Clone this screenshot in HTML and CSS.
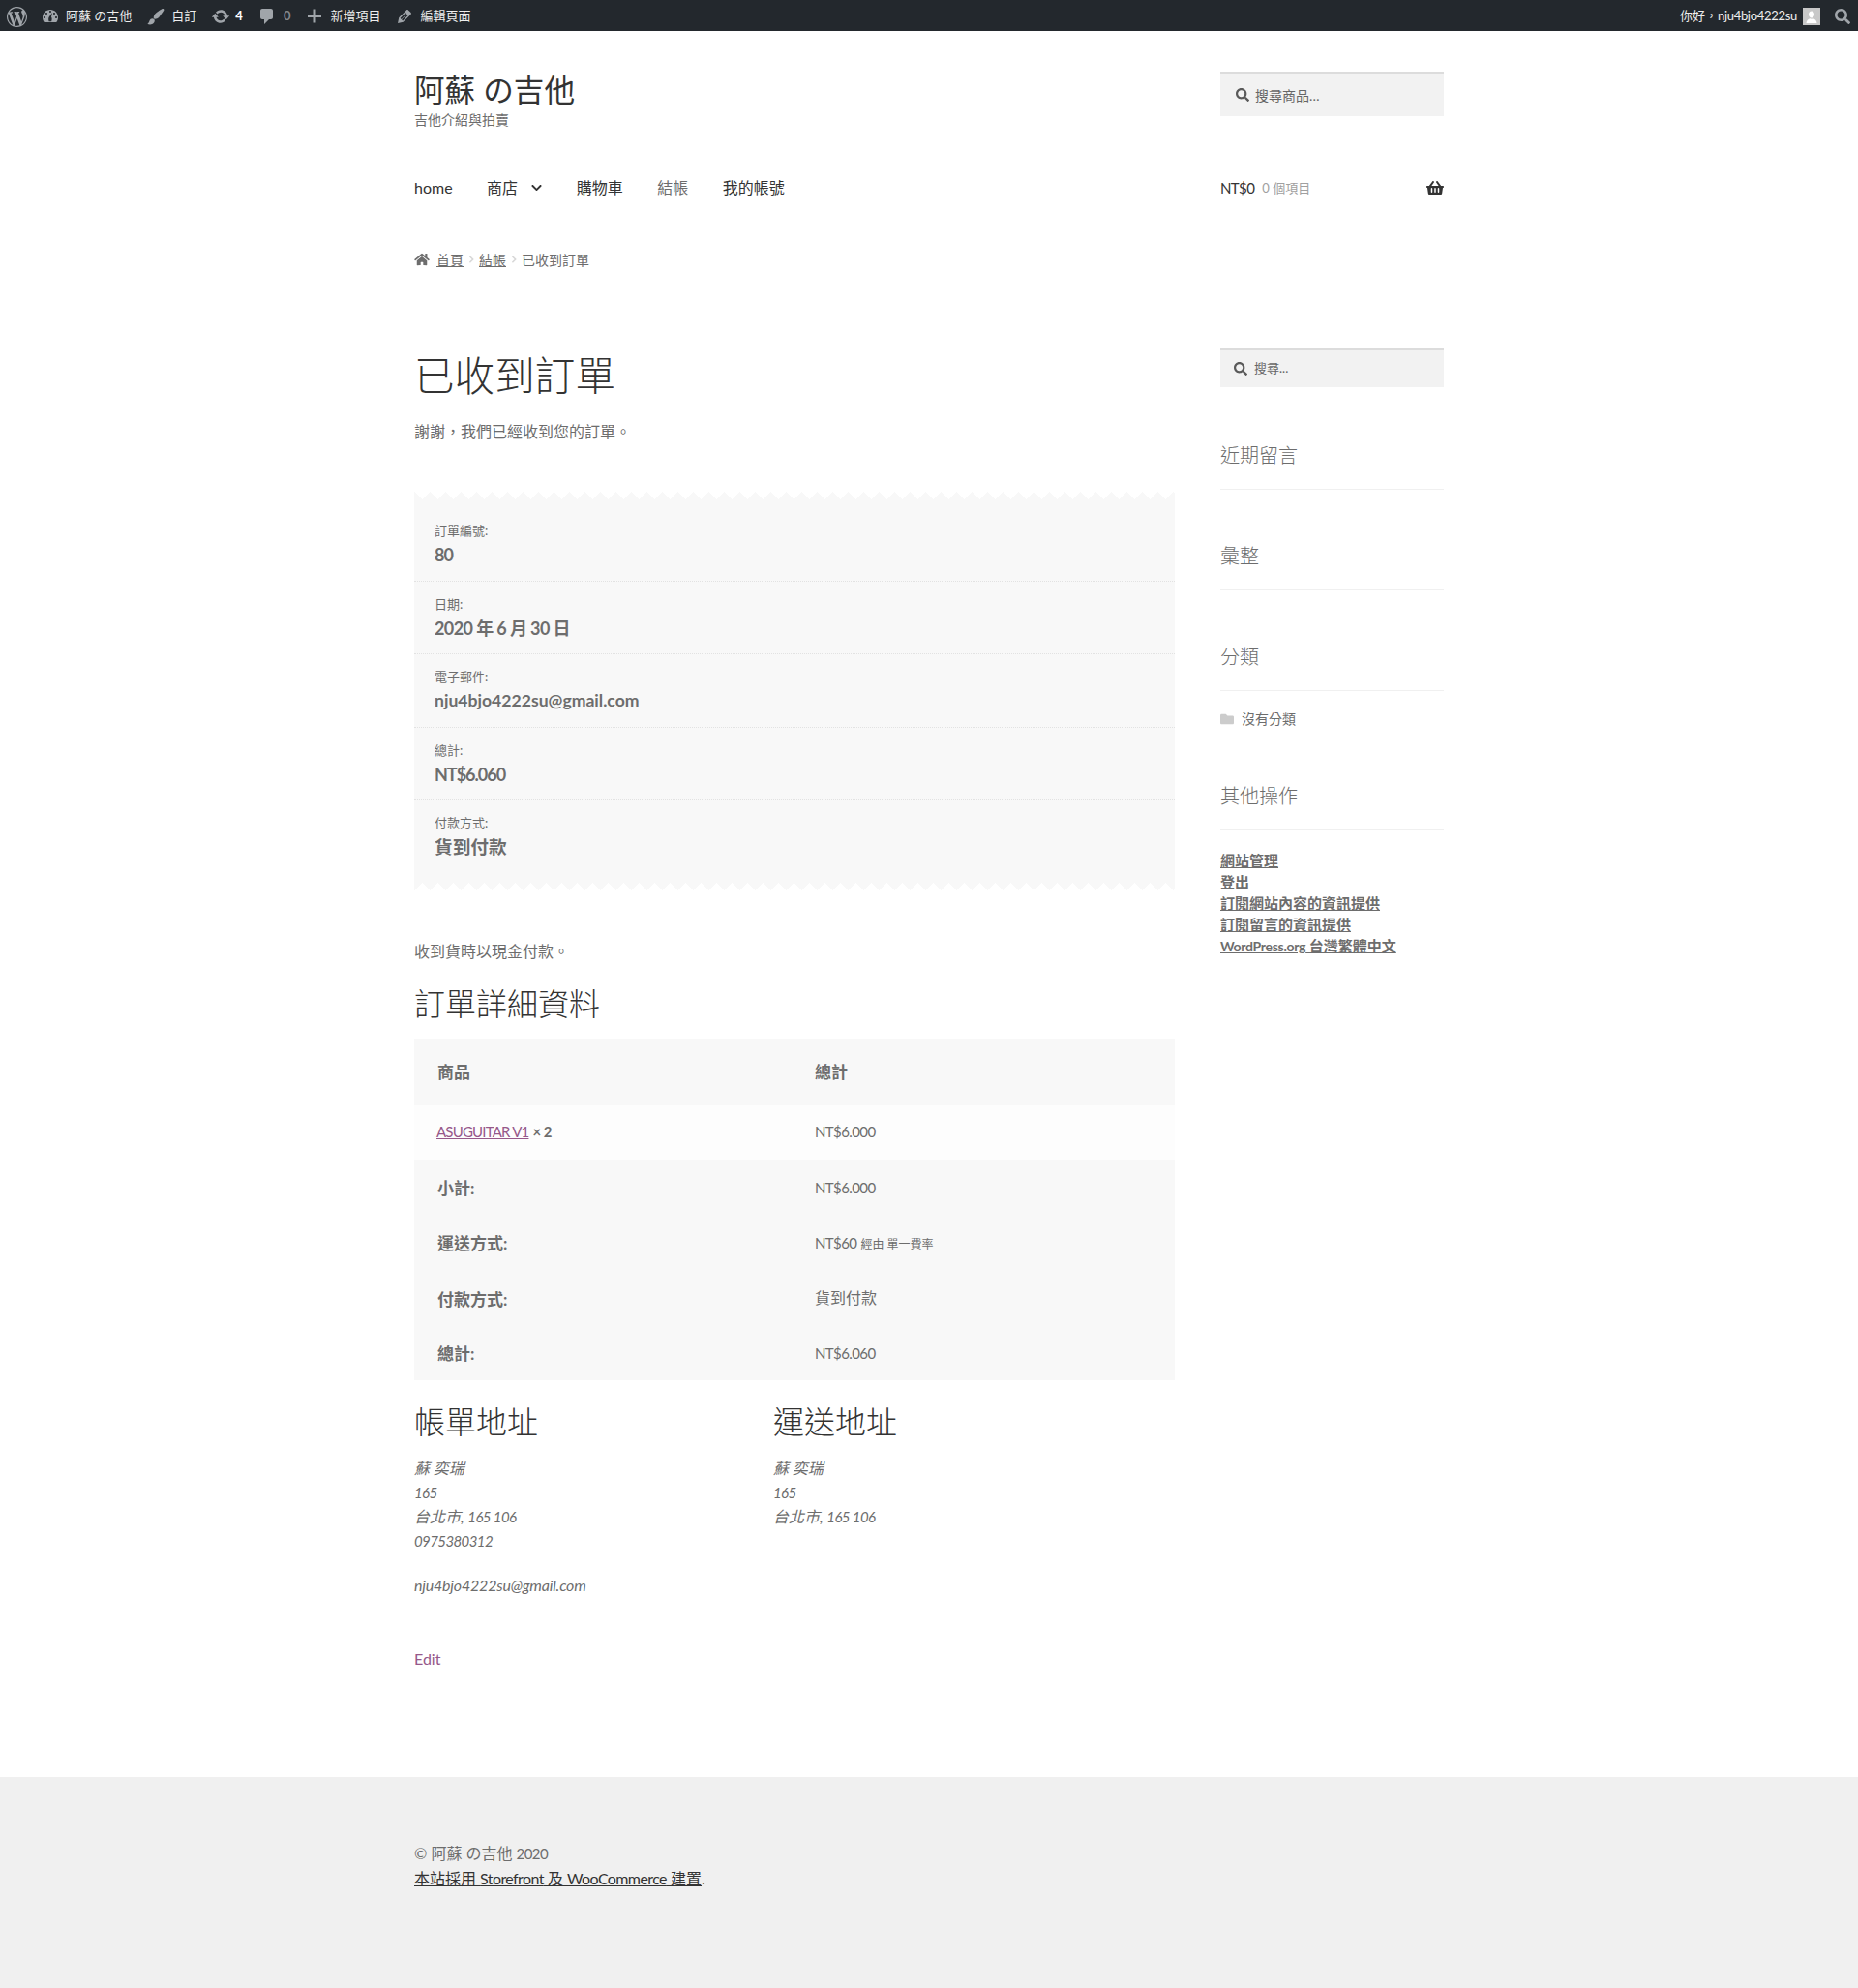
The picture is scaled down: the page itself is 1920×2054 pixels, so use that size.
FILE: index.html
```html
<!DOCTYPE html>
<html lang="zh-Hant">
<head>
    <meta charset="UTF-8">
    <title>已收到訂單 – 阿蘇 の吉他</title>
    <link rel="stylesheet" href="styles.css">
</head>
<body>
    <!-- Admin bar -->
    <div class="adminbar">
        <div class="adminbar-left">
            <svg class="ab-logo" viewBox="0 0 20 20"><path d="M20 10c0-5.51-4.49-10-10-10C4.480 0 0 4.490 0 10c0 5.520 4.480 10 10 10 5.510 0 10-4.480 10-10zM7.780 15.370L4.370 6.220c.55-.02 1.170-.08 1.170-.08.500-.060.440-1.130-.060-1.110 0 0-1.450.11-2.370.11-.18 0-.37 0-.58-.01C4.120 2.690 6.870 1.110 10 1.110c2.330 0 4.450.87 6.050 2.340-.68-.11-1.650.39-1.650 1.580 0 .74.450 1.360.9 2.100.350.610.55 1.360.55 2.460 0 1.490-1.400 5-1.400 5l-3.030-8.370c.54-.02.82-.17.82-.17.5-.05.44-1.250-.06-1.220 0 0-1.440.12-2.380.12-.87 0-2.330-.12-2.330-.12-.5-.03-.56 1.200-.06 1.220l.92.080 1.260 3.410zM17.410 10c.24-.64.74-1.870.43-4.250.7 1.290 1.050 2.710 1.050 4.250 0 3.290-1.730 6.240-4.400 7.780.97-2.590 1.940-5.200 2.920-7.780zM6.100 18.090C3.120 16.650 1.110 13.530 1.110 10c0-1.300.23-2.480.72-3.590C3.250 10.300 4.670 14.200 6.100 18.090zm4.030-6.630l2.580 6.980c-.86.29-1.760.45-2.710.45-.79 0-1.570-.11-2.290-.33.81-2.380 1.620-4.740 2.420-7.100z"/></svg>
            <a class="ab-item">
                <svg class="ab-icon" viewBox="0 0 20 20"><path d="M3.760 16h12.480c1.100-1.370 1.760-3.110 1.760-5 0-4.420-3.580-8-8-8s-8 3.580-8 8c0 1.890.66 3.630 1.760 5zM10 4c.55 0 1 .45 1 1s-.45 1-1 1-1-.45-1-1 .45-1 1-1zM6 6c.55 0 1 .45 1 1s-.45 1-1 1-1-.45-1-1 .45-1 1-1zm8 0c.55 0 1 .45 1 1s-.45 1-1 1-1-.45-1-1 .45-1 1-1zm-5.370 9.350s-.46-1.180-.46-2.500c0-.8.17-1.530.46-2.050L12 6l-1 4.500c.36.520.63 1.250.63 2.050 0 1.320-.46 2.800-.46 2.800zM4 10c.55 0 1 .45 1 1s-.45 1-1 1-1-.45-1-1 .45-1 1-1zm12 0c.55 0 1 .45 1 1s-.45 1-1 1-1-.45-1-1 .45-1 1-1z"/></svg>
                <span>阿蘇 の吉他</span>
            </a>
            <a class="ab-item">
                <svg class="ab-icon" viewBox="0 0 20 20"><path d="M18.330 3.570s.27-.8-.31-1.360c-.53-.52-1.220-.24-1.220-.24-.61.300-5.760 3.470-7.670 5.570-.86.960-2.060 3.790-1.090 4.820.92.980 3.960-.17 4.790-1 2.060-2.060 5.210-7.170 5.500-7.790zM1.400 17.650c2.370-1.560 1.460-3.410 3.230-4.850.93-.75 2.390-.97 3.410.01 1.020.97.980 2.680.020 3.780-2.280 2.590-5.280 2.100-6.660 1.060z"/></svg>
                <span>自訂</span>
            </a>
            <a class="ab-item">
                <svg class="ab-icon" viewBox="0 0 20 20"><path d="M10.200 3.280c3.530 0 6.430 2.610 6.920 6h2.080l-3.500 4-3.500-4h2.320c-.45-1.970-2.210-3.440-4.320-3.440-1.450 0-2.730.71-3.540 1.780L4.950 5.660C6.230 4.200 8.110 3.280 10.200 3.280zm-.4 13.440c-3.520 0-6.430-2.610-6.920-6H.8l3.500-4c1.170 1.330 2.330 2.670 3.500 4H5.480c.45 1.970 2.210 3.440 4.320 3.440 1.450 0 2.730-.71 3.540-1.780l1.710 1.950c-1.280 1.460-3.150 2.390-5.250 2.390z"/></svg>
                <span class="ab-count">4</span>
            </a>
            <a class="ab-item">
                <svg class="ab-icon" viewBox="0 0 20 20"><path d="M5 2h9c1.100 0 2 .9 2 2v7c0 1.100-.9 2-2 2h-2l-5 5v-5H5c-1.100 0-2-.9-2-2V4c0-1.100.9-2 2-2z"/></svg>
                <span class="ab-count ab-zero">0</span>
            </a>
            <a class="ab-item">
                <svg class="ab-icon" viewBox="0 0 20 20"><path d="M17 8v3h-5.500v5.500h-3V11H3V8h5.500V2.500h3V8z"/></svg>
                <span>新增項目</span>
            </a>
            <a class="ab-item">
                <svg class="ab-icon" viewBox="0 0 20 20"><path d="M13.890 3.390l2.710 2.700c.46.460.42 1.240.03 1.640l-8.010 8.020-5.560 1.160 1.160-5.580s7.600-7.630 7.990-8.030c.39-.39 1.220-.39 1.680.09zM11.160 6.180l-5.590 5.610 1.110 1.110 5.540-5.650zM8.190 14.410l5.580-5.600-1.120-1.120-5.580 5.600z"/></svg>
                <span>編輯頁面</span>
            </a>
        </div>
        <div class="adminbar-right">
            <span>你好，<span class="ab-user">nju4bjo4222su</span></span>
            <span class="ab-avatar">
                <svg viewBox="0 0 18 18"><path d="M9 3.500c1.900 0 3 1.500 3 3.300 0 1.900-1.200 3.700-3 3.700S6 8.700 6 6.800C6 5 7.100 3.500 9 3.500zM3.500 16c0-2.800 2.300-4.500 3.900-4.800.9.600 2.300.6 3.200 0 1.600.3 3.900 2 3.900 4.800z"/></svg>
            </span>
            <svg class="ab-search" viewBox="0 0 512 512"><path d="M505 442.700L405.300 343c-4.500-4.500-10.600-7-17-7H372c27.600-35.300 44-79.700 44-128C416 93.100 322.900 0 208 0S0 93.100 0 208s93.100 208 208 208c48.300 0 92.700-16.400 128-44v16.300c0 6.400 2.500 12.500 7 17l99.700 99.700c9.400 9.400 24.600 9.400 33.900 0l28.300-28.300c9.400-9.400 9.400-24.600.1-34zM208 336c-70.700 0-128-57.200-128-128 0-70.700 57.200-128 128-128 70.700 0 128 57.200 128 128 0 70.700-57.200 128-128 128z"/></svg>
        </div>
    </div>

    <!-- Site header -->
    <header class="site-header">
        <div class="col-full">
            <div class="header-top">
                <div class="branding">
                    <div class="site-title">阿蘇 の吉他</div>
                    <div class="tagline">吉他介紹與拍賣</div>
                </div>
                <div class="search-box header-search">
                    <svg class="fa-search" viewBox="0 0 512 512"><path d="M505 442.700L405.300 343c-4.500-4.500-10.600-7-17-7H372c27.600-35.300 44-79.700 44-128C416 93.100 322.900 0 208 0S0 93.100 0 208s93.100 208 208 208c48.300 0 92.700-16.400 128-44v16.300c0 6.400 2.500 12.500 7 17l99.700 99.700c9.400 9.400 24.600 9.400 33.900 0l28.300-28.300c9.400-9.400 9.400-24.600.1-34zM208 336c-70.700 0-128-57.200-128-128 0-70.700 57.200-128 128-128 70.700 0 128 57.200 128 128 0 70.700-57.200 128-128 128z"/></svg>
                    <span>搜尋商品…</span>
                </div>
            </div>
            <div class="header-nav">
                <nav class="main-nav">
                    <a>home</a>
                    <a class="has-sub">商店
                        <svg class="chevron" viewBox="0 0 448 512"><path d="M207.029 381.476L12.686 187.132c-9.373-9.373-9.373-24.569 0-33.941l22.667-22.667c9.357-9.357 24.522-9.375 33.901-.04L224 284.505l154.745-154.021c9.379-9.335 24.544-9.317 33.901.04l22.667 22.667c9.373 9.373 9.373 24.569 0 33.941L240.971 381.476c-9.373 9.372-24.569 9.372-33.942 0z"/></svg>
                    </a>
                    <a>購物車</a>
                    <a class="current">結帳</a>
                    <a>我的帳號</a>
                </nav>
                <div class="cart">
                    <span class="cart-amount">NT$0</span>
                    <span class="cart-count">0 個項目</span>
                    <svg class="basket" viewBox="0 0 576 512"><path d="M576 216v16c0 13.255-10.745 24-24 24h-8l-26.113 182.788C514.509 462.435 494.257 480 470.370 480H105.630c-23.887 0-44.139-17.565-47.518-41.212L32 256h-8c-13.255 0-24-10.745-24-24v-16c0-13.255 10.745-24 24-24h67.341l106.780-146.821c10.395-14.292 30.407-17.453 44.701-7.058 14.293 10.395 17.453 30.408 7.058 44.701L170.477 192h235.046L326.120 82.821c-10.395-14.292-7.234-34.306 7.059-44.701 14.291-10.395 34.306-7.235 44.701 7.058L484.659 192H552c13.255 0 24 10.745 24 24zM312 392V280c0-13.255-10.745-24-24-24s-24 10.745-24 24v112c0 13.255 10.745 24 24 24s24-10.745 24-24zm112 0V280c0-13.255-10.745-24-24-24s-24 10.745-24 24v112c0 13.255 10.745 24 24 24s24-10.745 24-24zm-224 0V280c0-13.255-10.745-24-24-24s-24 10.745-24 24v112c0 13.255 10.745 24 24 24s24-10.745 24-24z"/></svg>
                </div>
            </div>
        </div>
    </header>

    <div class="col-full">
        <!-- Breadcrumb -->
        <div class="breadcrumb">
            <svg class="home-icon" viewBox="0 0 576 512"><path d="M280.370 148.260L96 300.110V464a16 16 0 0 0 16 16l112.060-.29a16 16 0 0 0 15.920-16V368a16 16 0 0 1 16-16h64a16 16 0 0 1 16 16v95.640a16 16 0 0 0 16 16.050L464 480a16 16 0 0 0 16-16V300L295.670 148.260a12.190 12.190 0 0 0-15.300 0zM571.600 251.470L488 182.560V44.050a12 12 0 0 0-12-12h-56a12 12 0 0 0-12 12v72.610L318.470 43a48 48 0 0 0-61 0L4.340 251.470a12 12 0 0 0-1.600 16.900l25.500 31A12 12 0 0 0 45.150 301l235.220-193.740a12.190 12.190 0 0 1 15.300 0L530.900 301a12 12 0 0 0 16.900-1.600l25.500-31a12 12 0 0 0-1.700-16.930z"/></svg>
            <a>首頁</a>
            <svg class="crumb-sep" viewBox="0 0 6 10"><path d="M1 1l4 4-4 4" /></svg>
            <a>結帳</a>
            <svg class="crumb-sep" viewBox="0 0 6 10"><path d="M1 1l4 4-4 4" /></svg>
            <span>已收到訂單</span>
        </div>

        <div class="content-area">
            <!-- Main column -->
            <main class="main-col">
                <h1>已收到訂單</h1>
                <p class="thanks">謝謝，我們已經收到您的訂單。</p>

                <div class="zigzag zigzag-top"></div>
                <ul class="order-overview">
                    <li><span>訂單編號:</span><strong class="tight">80</strong></li>
                    <li><span>日期:</span><strong class="date">2020 年 6 月 30 日</strong></li>
                    <li><span>電子郵件:</span><strong class="mail">nju4bjo4222su@gmail.com</strong></li>
                    <li><span>總計:</span><strong class="tight">NT$6.060</strong></li>
                    <li><span>付款方式:</span><strong class="cjk">貨到付款</strong></li>
                </ul>
                <div class="zigzag zigzag-bottom"></div>

                <p class="pay-note">收到貨時以現金付款。</p>

                <h2>訂單詳細資料</h2>
                <table class="order-table">
                    <thead>
                        <tr><th class="col-name">商品</th><th>總計</th></tr>
                    </thead>
                    <tbody>
                        <tr class="item-row">
                            <td><a class="product-link num">ASUGUITAR V1</a> <strong class="qty num">× 2</strong></td>
                            <td><span class="num">NT$6.000</span></td>
                        </tr>
                    </tbody>
                    <tfoot>
                        <tr><th>小計:</th><td><span class="num">NT$6.000</span></td></tr>
                        <tr><th>運送方式:</th><td><span class="num">NT$60</span> <small>經由 單一費率</small></td></tr>
                        <tr><th>付款方式:</th><td>貨到付款</td></tr>
                        <tr class="last-row"><th>總計:</th><td><span class="num">NT$6.060</span></td></tr>
                    </tfoot>
                </table>

                <div class="addresses">
                    <div class="address-col">
                        <h3>帳單地址</h3>
                        <address>
                            蘇 奕瑞<br><span class="num">165</span><br>台北市, <span class="num">165 106</span><br><span class="num">0975380312</span>
                            <span class="address-email">nju4bjo4222su@gmail.com</span>
                        </address>
                    </div>
                    <div class="address-col">
                        <h3>運送地址</h3>
                        <address>蘇 奕瑞<br><span class="num">165</span><br>台北市, <span class="num">165 106</span></address>
                    </div>
                </div>

                <a class="edit-link">Edit</a>
            </main>

            <!-- Sidebar -->
            <aside class="sidebar">
                <div class="search-box sidebar-search">
                    <svg class="fa-search" viewBox="0 0 512 512"><path d="M505 442.700L405.300 343c-4.500-4.500-10.600-7-17-7H372c27.600-35.300 44-79.700 44-128C416 93.100 322.900 0 208 0S0 93.100 0 208s93.100 208 208 208c48.300 0 92.700-16.400 128-44v16.300c0 6.400 2.500 12.500 7 17l99.700 99.700c9.400 9.400 24.600 9.400 33.900 0l28.300-28.300c9.400-9.400 9.400-24.600.1-34zM208 336c-70.700 0-128-57.200-128-128 0-70.700 57.200-128 128-128 70.700 0 128 57.200 128 128 0 70.700-57.200 128-128 128z"/></svg>
                    <span>搜尋...</span>
                </div>
                <h4 class="widget-title">近期留言</h4>
                <h4 class="widget-title">彙整</h4>
                <h4 class="widget-title">分類</h4>
                <div class="category">
                    <svg class="folder" viewBox="0 0 512 512"><path d="M464 128H272l-64-64H48C21.490 64 0 85.490 0 112v288c0 26.510 21.490 48 48 48h416c26.510 0 48-21.490 48-48V176c0-26.510-21.490-48-48-48z"/></svg>
                    <span>沒有分類</span>
                </div>
                <h4 class="widget-title widget-meta">其他操作</h4>
                <ul class="meta-links">
                    <li><a>網站管理</a></li>
                    <li><a>登出</a></li>
                    <li><a>訂閱網站內容的資訊提供</a></li>
                    <li><a>訂閱留言的資訊提供</a></li>
                    <li><a><span class="meta-latin">WordPress.org</span> 台灣繁體中文</a></li>
                </ul>
            </aside>
        </div>
    </div>

    <!-- Footer -->
    <footer class="site-footer">
        <div class="col-full">
            <div>© 阿蘇 の吉他 <span class="num">2020</span></div>
            <div><a>本站採用 <span class="footer-latin">Storefront</span> 及 <span class="footer-latin">WooCommerce</span> 建置</a>.</div>
        </div>
    </footer>
</body>
</html>
```

FILE: styles.css
```css
* {
    box-sizing: border-box;
}
body {
    font-family: Lato, "Noto Sans CJK TC", sans-serif;
    font-size: 16px;
    line-height: 1.5;
    background-color: #fff;
    color: #6d6d6d;
    margin: 0;
}
a {
    color: inherit;
}
ul {
    list-style: none;
    margin: 0;
    padding: 0;
}
.col-full {
    width: 1064px;
    margin: 0 auto;
}
/* Latin and digits run narrower in the original font */
.num {
    font-size: 15px;
    letter-spacing: -.6px;
}

/* Admin bar */
.adminbar {
    height: 32px;
    background-color: #23282d;
    color: #eee;
    font-size: 13px;
    display: flex;
    justify-content: space-between;
    align-items: center;
    padding: 2px 5px 0 7px;
}
.adminbar-left,
.adminbar-right,
.ab-item {
    display: flex;
    align-items: center;
}
.ab-logo {
    width: 21px;
    height: 21px;
    fill: #a0a5aa;
    margin-right: 14px;
}
.ab-item {
    margin-right: 15px;
}
.ab-icon {
    width: 20px;
    height: 20px;
    fill: #a0a5aa;
    margin-right: 6px;
}
.ab-count {
    font-weight: 700;
    color: #fff;
    margin-left: -1px;
}
.ab-zero {
    color: #82878c;
    margin-left: 1px;
}
.ab-user {
    letter-spacing: -.3px;
}
.ab-avatar {
    width: 18px;
    height: 18px;
    background-color: #c8c8c8;
    margin: 0 15px 0 6px;
}
.ab-avatar svg {
    display: block;
    fill: #fff;
}
.ab-search {
    width: 16px;
    height: 16px;
    fill: #a0a5aa;
    margin-right: 3px;
}

/* Header */
.site-header {
    border-bottom: 1px solid #f0f0f0;
    height: 202px;
}
.header-top {
    display: flex;
    justify-content: space-between;
    padding-top: 42px;
    height: 142px;
}
.site-title {
    font-size: 31.6px;
    line-height: 42px;
    color: #333;
    margin-top: -2px;
}
.tagline {
    font-size: 14px;
    line-height: 20px;
}
.search-box {
    width: 231px;
    background-color: #f2f2f2;
    border-top: 2px solid #dcdcdc;
    display: flex;
    align-items: center;
    font-size: 14px;
    color: #666;
}
.header-search {
    height: 46px;
    padding-left: 16px;
}
.fa-search {
    width: 14px;
    height: 14px;
    fill: #5a5a5a;
    margin-right: 6px;
}
.header-nav {
    display: flex;
    justify-content: space-between;
    align-items: center;
    height: 40px;
}
.main-nav {
    display: flex;
    align-items: center;
    gap: 35.5px;
    color: #333;
}
.has-sub {
    display: flex;
    align-items: center;
    gap: 14px;
}
.chevron {
    width: 11px;
    height: 12px;
    fill: #333;
}
.current {
    color: #6d6d6d;
}
.cart {
    width: 231px;
    display: flex;
    align-items: center;
    color: #333;
}
.cart-amount {
    font-size: 15px;
    letter-spacing: -.6px;
}
.cart-count {
    font-size: 13px;
    color: #a0a0a0;
    margin-left: 8px;
    padding-top: 1px;
    flex: 1;
}
.basket {
    width: 18px;
    height: 16px;
    fill: #333;
}

/* Breadcrumb */
.breadcrumb {
    display: flex;
    align-items: center;
    font-size: 14px;
    height: 70px;
    padding-bottom: 2px;
}
.breadcrumb a {
    text-decoration: underline;
}
.home-icon {
    width: 16px;
    height: 14px;
    fill: #6d6d6d;
    margin-right: 7px;
}
.crumb-sep {
    width: 6px;
    height: 8px;
    fill: none;
    stroke: #d8d8d8;
    stroke-width: 2;
    margin: 0 5px;
}

/* Main layout */
.content-area {
    display: flex;
    justify-content: space-between;
    padding-top: 56px;
}
.main-col {
    width: 786px;
}
.sidebar {
    width: 231px;
}
h1,
h2,
h3,
h4 {
    font-weight: 300;
    margin: 0;
}
h1 {
    font-size: 41.6px;
    line-height: 52px;
    color: #333;
    margin-top: 2px;
}
.thanks {
    margin: 20px 0 0;
    line-height: 24px;
}

/* Order overview receipt */
.zigzag {
    height: 8px;
    background-size: 16px 16px;
    background-repeat: repeat-x;
}
.zigzag-top {
    margin-top: 50px;
    background-image: linear-gradient(135deg, transparent 50%, #f8f8f8 50%), linear-gradient(225deg, transparent 50%, #f8f8f8 50%);
    background-position: 0 0, 0 0;
}
.zigzag-bottom {
    background-image: linear-gradient(45deg, transparent 50%, #f8f8f8 50%), linear-gradient(-45deg, transparent 50%, #f8f8f8 50%);
    background-position: 0 100%, 0 100%;
}
.order-overview {
    background-color: #f8f8f8;
    padding: 9px 0 10px;
}
.order-overview li {
    padding: 11px 0 14.6px 21px;
    border-bottom: 1px dotted #e2e2e2;
}
.order-overview li:last-child {
    border-bottom: 0;
}
.order-overview span,
.order-overview strong {
    display: block;
    line-height: 24px;
}
.order-overview span {
    font-size: 13px;
}
.order-overview strong {
    font-size: 18px;
    margin-top: 1px;
}
.order-overview .tight {
    letter-spacing: -1px;
}
.order-overview .date {
    letter-spacing: -.6px;
}
.order-overview .mail {
    font-size: 17.6px;
}
.order-overview .cjk {
    font-size: 18.7px;
}
.pay-note {
    margin: 51px 0 0;
    line-height: 24px;
}
h2 {
    font-size: 32px;
    line-height: 40px;
    color: #333;
    margin-top: 22px;
}

/* Order details table */
.order-table {
    width: 100%;
    border-collapse: collapse;
    margin-top: 16px;
    background-color: #f8f8f8;
    table-layout: fixed;
}
.order-table th,
.order-table td {
    padding: 0 24px;
    text-align: left;
    height: 57.4px;
}
.order-table th {
    font-size: 17px;
}
.order-table .col-name {
    width: 390px;
}
.order-table thead th {
    height: 69px;
}
.order-table td {
    padding-bottom: 2px;
}
.item-row td {
    background-color: #fdfdfd;
    height: 57px;
}
.order-table .last-row th,
.order-table .last-row td {
    height: 55px;
}
.order-table small {
    font-size: 12px;
}
.product-link {
    color: #96588a;
    text-decoration: underline;
    margin-left: -1px;
    letter-spacing: -.8px;
}
.qty {
    font-weight: 700;
}

/* Addresses */
.addresses {
    display: flex;
    margin-top: 21px;
}
.address-col {
    width: 371px;
}
h3 {
    font-size: 32px;
    line-height: 44px;
    color: #333;
}
address {
    font-style: italic;
    line-height: 24.8px;
    margin-top: 14px;
}
.address-email {
    display: block;
    margin-top: 22px;
    letter-spacing: -.2px;
}
.edit-link {
    display: block;
    color: #96588a;
    margin-top: 50px;
    line-height: 25px;
    padding-bottom: 110px;
}

/* Sidebar */
.sidebar-search {
    height: 40px;
    padding-left: 14px;
    font-size: 13px;
}
.sidebar-search .fa-search {
    margin-right: 7px;
}
.widget-title {
    font-size: 20px;
    line-height: 30px;
    padding-bottom: 20px;
    border-bottom: 1px solid #f0f0f0;
    margin-top: 53px;
}
.sidebar-search + .widget-title {
    margin-top: 55px;
}
.category {
    display: flex;
    align-items: center;
    font-size: 14px;
    margin-top: 18px;
}
.folder {
    width: 14px;
    height: 14px;
    fill: #ccc;
    margin-right: 8px;
}
.widget-meta {
    margin-top: 54px;
}
.meta-links {
    margin-top: 20px;
}
.meta-links li {
    font-size: 15px;
    font-weight: 700;
    line-height: 22px;
}
.meta-links a {
    text-decoration: underline;
}
.meta-latin {
    font-size: 14px;
    letter-spacing: -.3px;
}

/* Footer */
.site-footer {
    height: 219px;
    background-color: #f0f0f0;
    padding-top: 66px;
    line-height: 25px;
}
.site-footer a {
    color: #333;
    text-decoration: underline;
}
.footer-latin {
    letter-spacing: -.6px;
}
```
